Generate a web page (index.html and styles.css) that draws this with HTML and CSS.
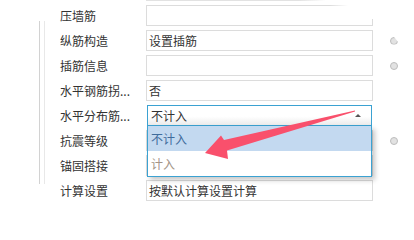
FILE: index.html
```html
<!DOCTYPE html>
<html>
<head>
<meta charset="utf-8">
<link rel="stylesheet" href="styles.css">
</head>
<body>
<div class="panel">
  <div class="gutter"><div class="line-outer"><div class="line-inner"></div></div></div>
  <div class="form">
    <div class="topline"></div>
    <div class="row"><span class="label">压墙筋</span><div class="field"></div><span class="dot-cell"></span></div>
    <div class="row"><span class="label">纵筋构造</span><div class="field">设置插筋</div><span class="dot-cell"><span class="dot dot-part"></span></span></div>
    <div class="row"><span class="label">插筋信息</span><div class="field"></div><span class="dot-cell"><span class="dot"></span></span></div>
    <div class="row"><span class="label">水平钢筋拐...</span><div class="field">否</div><span class="dot-cell"></span></div>
    <div class="row"><span class="label">水平分布筋...</span>
      <div class="field combo">不计入<span class="caret"></span>
        <div class="dropdown">
          <div class="opt opt-sel">不计入</div>
          <div class="opt">计入</div>
        </div>
      </div>
      <span class="dot-cell"></span></div>
    <div class="row"><span class="label">抗震等级</span><div class="field"></div><span class="dot-cell"><span class="dot"></span></span></div>
    <div class="row"><span class="label">锚固搭接</span><div class="field"></div><span class="dot-cell"></span></div>
    <div class="row"><span class="label">计算设置</span><div class="field">按默认计算设置计算</div><span class="dot-cell"></span></div>
  </div>
</div>
<div class="fade"></div>
<svg class="arrow" width="414" height="204" viewBox="0 0 414 204">
  <polygon points="355,110.5 224,140 221,135.5 205,153 228,159 227,150.5 355,111.5" fill="#f9506c"/>
</svg>
</body>
</html>
```
FILE: styles.css
```css
html, body {
  margin: 0;
  padding: 0;
  background: #fff;
}
body {
  width: 414px;
  height: 204px;
  overflow: hidden;
  position: relative;
  font-family: "Noto Sans CJK SC", "Noto Sans", sans-serif;
  font-size: 12px;
  color: #333;
}
.panel {
  display: flex;
}
.gutter {
  width: 21px;
  padding-left: 39px;
  padding-top: 21px;
}
.line-outer {
  height: 163px;
  width: 4px;
  border-left: 1px solid #d2d2d2;
}
.line-inner {
  height: 163px;
  margin-left: 4px;
  border-left: 1px solid #e8e8e8;
}
.form {
  display: flex;
  flex-direction: column;
  gap: 4px;
}
.topline {
  height: 1px;
  margin-left: 86px;
  width: 180px;
  background: linear-gradient(to right, #e2e2e2 0%, #e2e2e2 85%, rgba(226,226,226,0) 100%);
}
.row {
  display: flex;
  align-items: center;
  height: 21px;
}
.label {
  width: 86px;
  white-space: nowrap;
  line-height: 21px;
}
.field {
  box-sizing: border-box;
  width: 227px;
  height: 21px;
  border: 1px solid #dcdcdc;
  padding-left: 2px;
  line-height: 19px;
  white-space: nowrap;
}
.combo {
  position: relative;
  width: 225px;
  margin: 0 1px;
  border-color: #3ba2d2;
  background: linear-gradient(to bottom, #ffffff 0%, #ffffff 55%, #ebebeb 100%);
  padding-left: 3px;
}
.caret {
  position: absolute;
  right: 10px;
  top: 8px;
  width: 0;
  height: 0;
  border-left: 3px solid transparent;
  border-right: 3px solid transparent;
  border-bottom: 3px solid #555;
}
.dropdown {
  position: absolute;
  top: calc(100% + 1px);
  left: -1px;
  right: -1px;
  background: #fff;
  border: 1px solid #3ba2d2;
  border-top: none;
  box-shadow: 3px 3px 5px rgba(0, 0, 0, 0.22);
  z-index: 2;
}
.opt {
  height: 25px;
  line-height: 25px;
  padding-left: 3px;
  color: #a39486;
}
.opt-sel {
  background: #c3d9f0;
  color: #3f6c9c;
}
.dot-cell {
  width: 24px;
  padding-left: 17px;
  display: flex;
  align-items: center;
}
.dot {
  box-sizing: border-box;
  width: 8px;
  height: 8px;
  border-radius: 50%;
  background: #e2e2e2;
  border: 1px solid #bdbdbd;
}
.dot-part {
  clip-path: polygon(0 0, 45% 0, 100% 70%, 100% 100%, 0 100%);
}
.fade {
  position: absolute;
  left: 330px;
  top: 0;
  width: 60px;
  height: 19px;
  background: linear-gradient(to right, rgba(255,255,255,0) 0%, #fff 30%, #fff 100%);
}
.arrow {
  position: absolute;
  left: 0;
  top: 0;
  z-index: 5;
}
```
